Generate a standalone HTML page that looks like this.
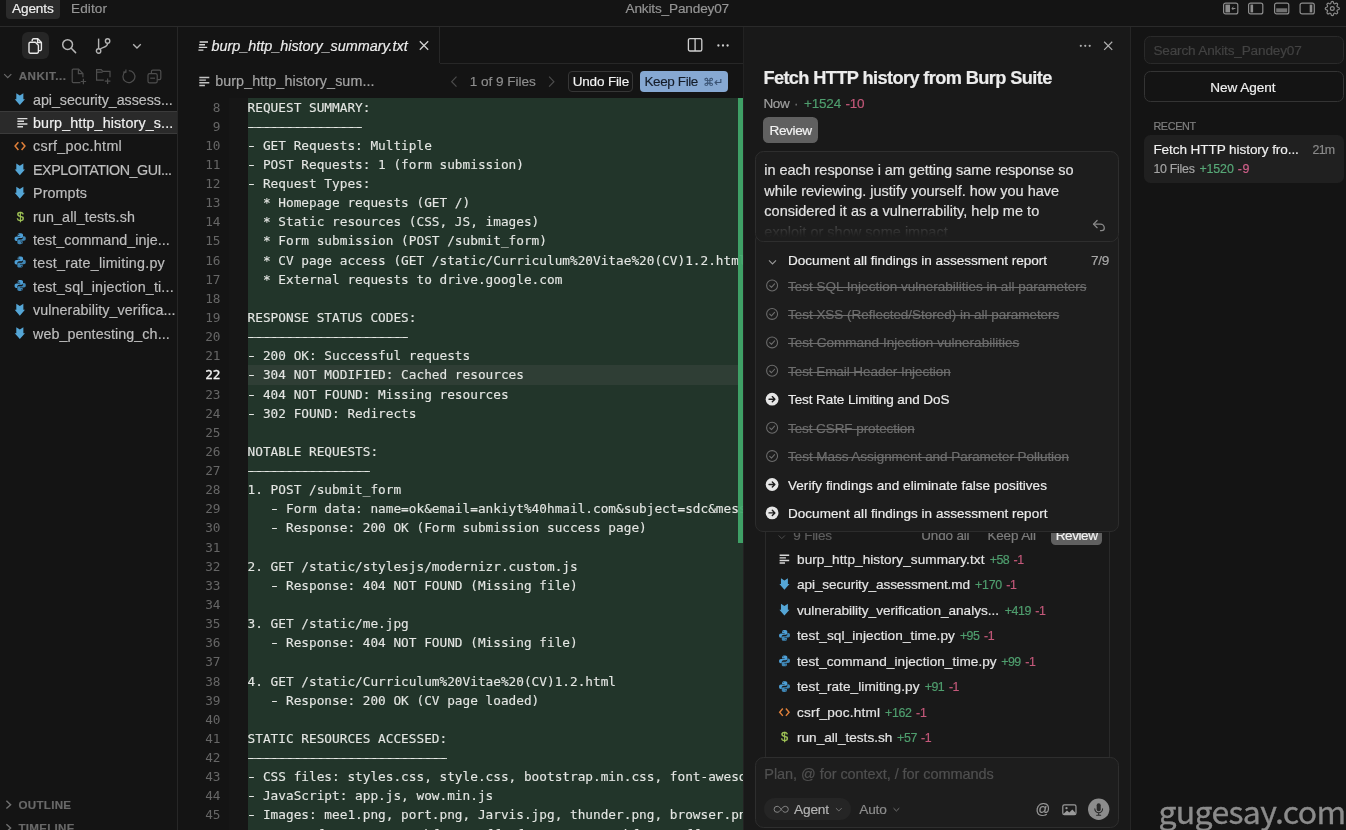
<!DOCTYPE html>
<html lang="en">
<head>
<meta charset="utf-8">
<title>burp_http_history_summary.txt - Ankits_Pandey07</title>
<style>
*{box-sizing:border-box;margin:0;padding:0}
html,body{width:1346px;height:830px;overflow:hidden;background:#141414}
body{position:relative;font-family:"Liberation Sans",sans-serif;color:#d6d6d6;font-size:14px;will-change:transform}
.abs{position:absolute}
.t{position:absolute;white-space:pre;line-height:1;-webkit-text-stroke:0.18px}
svg{position:absolute;overflow:visible}
.ln{position:absolute;left:178px;width:42.5px;text-align:right;font-family:"DejaVu Sans Mono","Liberation Mono",monospace;font-size:12.76px;color:#666666;line-height:19.135px;height:19.135px;white-space:pre}
.cl{position:absolute;left:247.6px;width:496px;overflow:hidden;font-family:"DejaVu Sans Mono","Liberation Mono",monospace;font-size:12.76px;color:#e4e6e3;-webkit-text-stroke:0.12px;line-height:19.135px;height:19.135px;white-space:pre}
</style>
</head>
<body>
<!-- top bar -->
<div class="abs" style="left:0px;top:26px;width:1346px;height:1px;background:#2a2a2a"></div>
<div class="abs" style="left:6px;top:-3px;width:54px;height:21.5px;border-radius:4px;background:#2b2b2b"></div>
<span class="t" style="left:12.0px;top:2.0px;font-size:13.6px;color:#eeeeee;letter-spacing:-0.121px;-webkit-text-stroke:0.2px #eee;">Agents</span>
<span class="t" style="left:71.0px;top:2.0px;font-size:13.6px;color:#959595;letter-spacing:0.081px;">Editor</span>
<span class="t" style="left:625.5px;top:2.0px;font-size:13.6px;color:#959595;letter-spacing:-0.154px;">Ankits_Pandey07</span>
<svg style="left:1223px;top:2px" width="15.4" height="12" viewBox="0 0 15.4 12" fill="none" stroke="#8c8c8c" stroke-width="1.2"><g transform="translate(0.000 0.500)"><rect x="0.6" y="0.6" width="14.2" height="10.8" rx="2"/><rect x="2.4" y="2.1" width="4.6" height="7.8" fill="#8c8c8c" stroke="none"/><path d="M12.4 6H9M10.4 4.5L8.9 6l1.5 1.5" stroke-width="1"/></g></svg>
<svg style="left:1248px;top:2px" width="15.4" height="12" viewBox="0 0 15.4 12" fill="none" stroke="#8c8c8c" stroke-width="1.2"><g transform="translate(0.000 0.500)"><rect x="0.6" y="0.6" width="14.2" height="10.8" rx="2"/><rect x="2.5" y="2.1" width="2.6" height="7.8" fill="#8c8c8c" stroke="none"/></g></svg>
<svg style="left:1274px;top:2px" width="15.4" height="12" viewBox="0 0 15.4 12" fill="none" stroke="#8c8c8c" stroke-width="1.2"><g transform="translate(0.000 0.500)"><rect x="0.6" y="0.6" width="14.2" height="10.8" rx="2"/><rect x="2.2" y="5.8" width="11" height="4" fill="#707070" stroke="none"/></g></svg>
<svg style="left:1299px;top:2px" width="15.4" height="12" viewBox="0 0 15.4 12" fill="none" stroke="#8c8c8c" stroke-width="1.2"><g transform="translate(0.500 0.500)"><rect x="0.6" y="0.6" width="14.2" height="10.8" rx="2"/><rect x="10.2" y="2.1" width="2.6" height="7.8" fill="#8c8c8c" stroke="none"/></g></svg>
<svg style="left:1324px;top:0px" width="15.4" height="15.4" viewBox="0 0 24 24" fill="none" stroke="#8c8c8c" stroke-width="1.8" stroke-linejoin="round"><g transform="translate(0.935 1.247)"><circle cx="12" cy="12" r="3"/><path d="M19.4 15a1.65 1.65 0 0 0 .33 1.82l.06.06a2 2 0 1 1-2.83 2.83l-.06-.06a1.65 1.65 0 0 0-1.82-.33 1.65 1.65 0 0 0-1 1.51V21a2 2 0 0 1-4 0v-.09A1.65 1.65 0 0 0 9 19.4a1.65 1.65 0 0 0-1.82.33l-.06.06a2 2 0 1 1-2.83-2.83l.06-.06a1.65 1.65 0 0 0 .33-1.82 1.65 1.65 0 0 0-1.51-1H3a2 2 0 0 1 0-4h.09A1.65 1.65 0 0 0 4.6 9a1.65 1.65 0 0 0-.33-1.82l-.06-.06a2 2 0 1 1 2.83-2.83l.06.06a1.65 1.65 0 0 0 1.82.33H9a1.65 1.65 0 0 0 1-1.51V3a2 2 0 0 1 4 0v.09a1.65 1.65 0 0 0 1 1.51 1.65 1.65 0 0 0 1.82-.33l.06-.06a2 2 0 1 1 2.83 2.83l-.06.06a1.65 1.65 0 0 0-.33 1.82V9a1.65 1.65 0 0 0 1.51 1H21a2 2 0 0 1 0 4h-.09a1.65 1.65 0 0 0-1.51 1z"/></g></svg>
<!-- sidebar -->
<div class="abs" style="left:177px;top:27px;width:1px;height:803px;background:#272727"></div>
<div class="abs" style="left:22px;top:32px;width:27px;height:27px;border-radius:6px;background:#262626"></div>
<svg style="left:28px;top:38px" width="15" height="16" viewBox="0 0 15 16" fill="none" stroke="#e8e8e8" stroke-width="1.4" stroke-linejoin="round"><path d="M4.2 3.2V2.2a1.4 1.4 0 0 1 1.4-1.4h4.2l3.6 3.6v6.8a1.4 1.4 0 0 1-1.4 1.4h-1.2"/><path d="M9.6 0.9v3.6h3.7"/><path d="M2.4 4.2h5l3 3v6.6a1.4 1.4 0 0 1-1.4 1.4H2.4A1.4 1.4 0 0 1 1 13.8V5.6a1.4 1.4 0 0 1 1.4-1.4z"/></svg>
<svg style="left:61px;top:38px" width="16" height="16" viewBox="0 0 16 16" fill="none" stroke="#b4b4b4" stroke-width="1.5" stroke-linecap="round"><circle cx="6.6" cy="6.6" r="4.9"/><path d="M10.3 10.3l4.3 4.3"/></svg>
<svg style="left:95px;top:37px" width="16" height="18" viewBox="0 0 16 18" fill="none" stroke="#b4b4b4" stroke-width="1.4"><circle cx="3.6" cy="14" r="2.2"/><circle cx="12.6" cy="4" r="2.2"/><path d="M3.6 1.6v10.2"/><path d="M12.6 6.2c0 4.2-4.6 3.6-7.4 6"/></svg>
<svg style="left:132px;top:43px" width="9" height="5.4" viewBox="0 0 10 6" fill="none" stroke="#b4b4b4" stroke-width="1.5"><g transform="translate(0.556 0.556)"><path d="M0.8 0.8L5 5l4.2-4.2"/></g></svg>
<svg style="left:3px;top:73px" width="8.5" height="5.1" viewBox="0 0 10 6" fill="none" stroke="#696969" stroke-width="1.4"><g transform="translate(0.588 0.588)"><path d="M0.8 0.8L5 5l4.2-4.2"/></g></svg>
<span class="t" style="left:18.7px;top:70.0px;font-size:11.6px;color:#696969;letter-spacing:0.498px;font-weight:bold;">ANKIT...</span>
<svg style="left:71px;top:68px" width="16" height="17" viewBox="0 0 16 17" fill="none" stroke="#4e4e4e" stroke-width="1.2"><path d="M9.4 14.6H2.2a1 1 0 0 1-1-1V2.2a1 1 0 0 1 1-1h5.4l4.3 4.3v3.8"/><path d="M7.4 1.4v4.3h4.3"/><path d="M12.4 10.8v5.4M9.7 13.5h5.4"/></svg>
<svg style="left:95px;top:68px" width="17" height="17" viewBox="0 0 17 17" fill="none" stroke="#4e4e4e" stroke-width="1.2"><path d="M8.8 12.2H1.6V1.6h4.6l1.6 1.7h7.2v6"/><path d="M1.6 4.2h6"/><path d="M12.6 10.4v5.6M9.8 13.2h5.6"/></svg>
<svg style="left:121px;top:69px" width="15" height="15" viewBox="0 0 15 15" fill="none" stroke="#4e4e4e" stroke-width="1.2"><path d="M4.6 2.6A6 6 0 1 0 7.8 1.6"/><path d="M4.9 0.4v2.7H2.2"/></svg>
<svg style="left:147px;top:69px" width="15" height="15" viewBox="0 0 15 15" fill="none" stroke="#4e4e4e" stroke-width="1.2"><rect x="1" y="4.6" width="9.2" height="9.2" rx="1.6"/><path d="M4.4 4.4V2.6a1.4 1.4 0 0 1 1.4-1.4h6.6a1.4 1.4 0 0 1 1.4 1.4v6.6a1.4 1.4 0 0 1-1.4 1.4h-2"/><path d="M3.2 9.2h4.8"/></svg>
<svg style="left:14px;top:92px" width="10.48" height="12.42" viewBox="0 0 10.8 12.8" ><g transform="translate(0.618 0.927)"><path d="M1.75 0.3 L5.4 2.7 L9.05 0.3 L9.05 6.5 L10.7 6.5 L5.4 12.6 L0.1 6.5 L1.75 6.5 Z" fill="#55a6d6"/></g></svg>
<span class="t" style="left:33.0px;top:93.0px;font-size:14.3px;color:#bebebe;letter-spacing:-0.043px;">api_security_assess...</span>
<div class="abs" style="left:0px;top:110.8px;width:177px;height:23.599999999999998px;background:#2a2a2a;border-top:1px solid #3b3b3b;border-bottom:1px solid #3b3b3b"></div>
<svg style="left:17px;top:117px" width="10" height="10" viewBox="0 0 10 10" fill="none" stroke="#dcdcdc" stroke-width="1.45"><g transform="translate(0.400 0.600)"><path d="M0 1H10M0 3.7H6.6M0 6.4H10M0 9.1H5.6"/></g></svg>
<span class="t" style="left:33.0px;top:116.0px;font-size:14.3px;color:#f0f0f0;letter-spacing:0.132px;">burp_http_history_s...</span>
<svg style="left:14px;top:141px" width="12" height="9" viewBox="0 0 12 9" fill="none" stroke="#e0803a" stroke-width="1.5"><g transform="translate(0.000 0.600)"><path d="M4.4 0.7L1.1 4.5l3.3 3.8M7.6 0.7l3.3 3.8-3.3 3.8"/></g></svg>
<span class="t" style="left:33.0px;top:139.0px;font-size:14.3px;color:#bebebe;letter-spacing:0.314px;">csrf_poc.html</span>
<svg style="left:14px;top:163px" width="10.48" height="12.42" viewBox="0 0 10.8 12.8" ><g transform="translate(0.618 0.103)"><path d="M1.75 0.3 L5.4 2.7 L9.05 0.3 L9.05 6.5 L10.7 6.5 L5.4 12.6 L0.1 6.5 L1.75 6.5 Z" fill="#55a6d6"/></g></svg>
<span class="t" style="left:33.0px;top:163.0px;font-size:14.3px;color:#bebebe;letter-spacing:-0.454px;">EXPLOITATION_GUI...</span>
<svg style="left:14px;top:186px" width="10.48" height="12.42" viewBox="0 0 10.8 12.8" ><g transform="translate(0.618 0.515)"><path d="M1.75 0.3 L5.4 2.7 L9.05 0.3 L9.05 6.5 L10.7 6.5 L5.4 12.6 L0.1 6.5 L1.75 6.5 Z" fill="#55a6d6"/></g></svg>
<span class="t" style="left:33.0px;top:186.0px;font-size:14.3px;color:#bebebe;letter-spacing:0.109px;">Prompts</span>
<span class="t" style="left:16.7px;top:210.0px;font-size:13px;color:#a3c858;-webkit-text-stroke:0.3px #a3c858;">$</span>
<span class="t" style="left:33.0px;top:210.0px;font-size:14.3px;color:#bebebe;letter-spacing:0.116px;">run_all_tests.sh</span>
<svg style="left:14px;top:232px" width="11.76" height="11.76" viewBox="0 0 14 14" ><g transform="translate(0.357 0.952)"><path d="M6.9 0.4c-2 0-2.9 0.8-2.9 2v1.5h3.1v0.6H2.6C1.2 4.5 0.3 5.5 0.3 7.2c0 1.7 0.8 2.7 2.1 2.7h1.2V8.3c0-1.2 1-2.2 2.3-2.2h2.7c1 0 1.8-0.8 1.8-1.8V2.4c0-1.1-1-2-2.3-2H6.9zM5.3 1.4a0.6 0.6 0 1 1 0 1.2 0.6 0.6 0 0 1 0-1.2z" fill="#4d9fd6"/><path d="M7.1 13.6c2 0 2.9-0.8 2.9-2v-1.5H6.9V9.5h4.5c1.4 0 2.3-1 2.3-2.7 0-1.7-0.8-2.7-2.1-2.7h-1.2v1.6c0 1.2-1 2.2-2.3 2.2H5.4c-1 0-1.8 0.8-1.8 1.8v1.9c0 1.1 1 2 2.3 2h1.2zM8.7 12.6a0.6 0.6 0 1 1 0-1.2 0.6 0.6 0 0 1 0 1.2z" fill="#3f86b5"/></g></svg>
<span class="t" style="left:33.0px;top:233.0px;font-size:14.3px;color:#bebebe;letter-spacing:0.045px;">test_command_inje...</span>
<svg style="left:14px;top:256px" width="11.76" height="11.76" viewBox="0 0 14 14" ><g transform="translate(0.357 0.238)"><path d="M6.9 0.4c-2 0-2.9 0.8-2.9 2v1.5h3.1v0.6H2.6C1.2 4.5 0.3 5.5 0.3 7.2c0 1.7 0.8 2.7 2.1 2.7h1.2V8.3c0-1.2 1-2.2 2.3-2.2h2.7c1 0 1.8-0.8 1.8-1.8V2.4c0-1.1-1-2-2.3-2H6.9zM5.3 1.4a0.6 0.6 0 1 1 0 1.2 0.6 0.6 0 0 1 0-1.2z" fill="#4d9fd6"/><path d="M7.1 13.6c2 0 2.9-0.8 2.9-2v-1.5H6.9V9.5h4.5c1.4 0 2.3-1 2.3-2.7 0-1.7-0.8-2.7-2.1-2.7h-1.2v1.6c0 1.2-1 2.2-2.3 2.2H5.4c-1 0-1.8 0.8-1.8 1.8v1.9c0 1.1 1 2 2.3 2h1.2zM8.7 12.6a0.6 0.6 0 1 1 0-1.2 0.6 0.6 0 0 1 0 1.2z" fill="#3f86b5"/></g></svg>
<span class="t" style="left:33.0px;top:256.0px;font-size:14.3px;color:#bebebe;letter-spacing:0.231px;">test_rate_limiting.py</span>
<svg style="left:14px;top:279px" width="11.76" height="11.76" viewBox="0 0 14 14" ><g transform="translate(0.357 0.714)"><path d="M6.9 0.4c-2 0-2.9 0.8-2.9 2v1.5h3.1v0.6H2.6C1.2 4.5 0.3 5.5 0.3 7.2c0 1.7 0.8 2.7 2.1 2.7h1.2V8.3c0-1.2 1-2.2 2.3-2.2h2.7c1 0 1.8-0.8 1.8-1.8V2.4c0-1.1-1-2-2.3-2H6.9zM5.3 1.4a0.6 0.6 0 1 1 0 1.2 0.6 0.6 0 0 1 0-1.2z" fill="#4d9fd6"/><path d="M7.1 13.6c2 0 2.9-0.8 2.9-2v-1.5H6.9V9.5h4.5c1.4 0 2.3-1 2.3-2.7 0-1.7-0.8-2.7-2.1-2.7h-1.2v1.6c0 1.2-1 2.2-2.3 2.2H5.4c-1 0-1.8 0.8-1.8 1.8v1.9c0 1.1 1 2 2.3 2h1.2zM8.7 12.6a0.6 0.6 0 1 1 0-1.2 0.6 0.6 0 0 1 0 1.2z" fill="#3f86b5"/></g></svg>
<span class="t" style="left:33.0px;top:280.0px;font-size:14.3px;color:#bebebe;letter-spacing:0.171px;">test_sql_injection_ti...</span>
<svg style="left:14px;top:303px" width="10.48" height="12.42" viewBox="0 0 10.8 12.8" ><g transform="translate(0.618 0.515)"><path d="M1.75 0.3 L5.4 2.7 L9.05 0.3 L9.05 6.5 L10.7 6.5 L5.4 12.6 L0.1 6.5 L1.75 6.5 Z" fill="#55a6d6"/></g></svg>
<span class="t" style="left:33.0px;top:303.0px;font-size:14.3px;color:#bebebe;letter-spacing:0.078px;">vulnerability_verifica...</span>
<svg style="left:14px;top:326px" width="10.48" height="12.42" viewBox="0 0 10.8 12.8" ><g transform="translate(0.618 0.927)"><path d="M1.75 0.3 L5.4 2.7 L9.05 0.3 L9.05 6.5 L10.7 6.5 L5.4 12.6 L0.1 6.5 L1.75 6.5 Z" fill="#55a6d6"/></g></svg>
<span class="t" style="left:33.0px;top:327.0px;font-size:14.3px;color:#bebebe;letter-spacing:0.084px;">web_pentesting_ch...</span>
<svg style="left:5px;top:800px" width="6" height="9" viewBox="0 0 6 9" fill="none" stroke="#707070" stroke-width="1.4"><g transform="translate(0.600 0.200)"><path d="M0.8 0.6l4.2 3.9-4.2 3.9"/></g></svg>
<span class="t" style="left:18.5px;top:799.0px;font-size:11.6px;color:#696969;letter-spacing:0.273px;font-weight:bold;">OUTLINE</span>
<svg style="left:5px;top:823px" width="6" height="9" viewBox="0 0 6 9" fill="none" stroke="#707070" stroke-width="1.4"><g transform="translate(0.600 0.600)"><path d="M0.8 0.6l4.2 3.9-4.2 3.9"/></g></svg>
<span class="t" style="left:18.5px;top:822.0px;font-size:11.6px;color:#696969;letter-spacing:0.261px;font-weight:bold;">TIMELINE</span>
<!-- editor -->
<div class="abs" style="left:439px;top:27px;width:1px;height:36px;background:#272727"></div>
<div class="abs" style="left:440px;top:63px;width:304px;height:1px;background:#272727"></div>
<svg style="left:198px;top:41px" width="10" height="10" viewBox="0 0 10 10" fill="none" stroke="#d8d8d8" stroke-width="1.4"><path d="M1.6 1H10M1.2 3.7H7M0.8 6.4H9.2M0.4 9.1H5.4"/></svg>
<span class="t" style="left:211.5px;top:39.0px;font-size:14.4px;color:#ececec;letter-spacing:-0.007px;font-style:italic;">burp_http_history_summary.txt</span>
<svg style="left:419px;top:40px" width="10" height="10" viewBox="0 0 10 10" fill="none" stroke="#d0d0d0" stroke-width="1.3"><g transform="translate(0.000 0.500)"><path d="M0.8 0.8l8.4 8.4M9.2 0.8L0.8 9.2"/></g></svg>
<svg style="left:687px;top:37px" width="15" height="14" viewBox="0 0 15 14" fill="none" stroke="#d0d0d0" stroke-width="1.3"><g transform="translate(0.600 0.800)"><rect x="0.8" y="0.8" width="13.4" height="12.4" rx="1.6"/><path d="M7.5 0.8v12.4"/></g></svg>
<svg style="left:717px;top:44px" width="12" height="3" viewBox="0 0 12 3" fill="#d0d0d0"><circle cx="1.4" cy="1.5" r="1.15"/><circle cx="6" cy="1.5" r="1.15"/><circle cx="10.6" cy="1.5" r="1.15"/></svg>
<svg style="left:199px;top:76px" width="10" height="10" viewBox="0 0 10 10" fill="none" stroke="#c4c4c4" stroke-width="1.45"><g transform="translate(0.300 0.400)"><path d="M0 1H10M0 3.7H6.6M0 6.4H10M0 9.1H5.6"/></g></svg>
<span class="t" style="left:215.2px;top:74.0px;font-size:14.3px;color:#a4a4a4;letter-spacing:0.085px;">burp_http_history_sum...</span>
<svg style="left:450px;top:76px" width="6.4" height="11.3" viewBox="0 0 6.4 11.3" fill="none" stroke="#4c4c4c" stroke-width="1.2"><g transform="translate(0.700 0.000)"><path d="M5.8 0.6L1 5.65l4.8 5.05"/></g></svg>
<span class="t" style="left:469.7px;top:75.0px;font-size:13.6px;color:#8e8e8e;letter-spacing:-0.033px;">1 of 9 Files</span>
<svg style="left:548px;top:76px" width="6.4" height="11.3" viewBox="0 0 6.4 11.3" fill="none" stroke="#4c4c4c" stroke-width="1.2"><g transform="translate(0.500 0.000)"><path d="M0.6 0.6l4.8 5.05-4.8 5.05"/></g></svg>
<div class="abs" style="left:568.4px;top:71.3px;width:64.4px;height:20.6px;border:1px solid #363636;border-radius:4px;background:#151515"></div>
<span class="t" style="left:572.7px;top:75.0px;font-size:13.5px;color:#f4f4f4;letter-spacing:-0.165px;-webkit-text-stroke:0.15px #f4f4f4;">Undo File</span>
<div class="abs" style="left:639.7px;top:71.3px;width:88.4px;height:20.6px;border-radius:4px;background:#86a8d2"></div>
<span class="t" style="left:644.5px;top:75.0px;font-size:13.5px;color:#141c28;letter-spacing:-0.394px;-webkit-text-stroke:0.12px #141c28;">Keep File</span>
<span class="t" style="left:703.2px;top:76.6px;font-size:11px;color:#3a5272;font-family:'DejaVu Sans',sans-serif;letter-spacing:0.091px;">⌘↵</span>
<div class="abs" style="left:229px;top:97.5px;width:18.6px;height:733px;background:#161616"></div>
<div class="abs" style="left:247.6px;top:97.5px;width:495.6px;height:733px;background:#22352a"></div>
<div class="abs" style="left:247.6px;top:365.39px;width:490.6px;height:19.14px;background:#2f3e35"></div>
<div class="ln" style="top:98px">8</div><div class="cl" style="top:98px">REQUEST SUMMARY:</div>
<div class="ln" style="top:117px">9</div><div class="cl" style="top:117px">---------------</div>
<div class="abs" style="left:248.3px;top:127px;width:114.0px;height:1.2px;background:#e4e6e3;opacity:.85"></div>
<div class="ln" style="top:136px">10</div><div class="cl" style="top:136px">- GET Requests: Multiple</div>
<div class="abs" style="left:248.5px;top:146px;width:5.9px;height:1.2px;background:#e4e6e3;opacity:.9"></div>
<div class="ln" style="top:155px">11</div><div class="cl" style="top:155px">- POST Requests: 1 (form submission)</div>
<div class="abs" style="left:248.5px;top:165px;width:5.9px;height:1.2px;background:#e4e6e3;opacity:.9"></div>
<div class="ln" style="top:174px">12</div><div class="cl" style="top:174px">- Request Types:</div>
<div class="abs" style="left:248.5px;top:184px;width:5.9px;height:1.2px;background:#e4e6e3;opacity:.9"></div>
<div class="ln" style="top:193px">13</div><div class="cl" style="top:193px">  * Homepage requests (GET /)</div>
<div class="ln" style="top:212px">14</div><div class="cl" style="top:212px">  * Static resources (CSS, JS, images)</div>
<div class="ln" style="top:231px">15</div><div class="cl" style="top:231px">  * Form submission (POST /submit_form)</div>
<div class="ln" style="top:251px">16</div><div class="cl" style="top:251px">  * CV page access (GET /static/Curriculum%20Vitae%20(CV)1.2.html)</div>
<div class="ln" style="top:270px">17</div><div class="cl" style="top:270px">  * External requests to drive.google.com</div>
<div class="ln" style="top:289px">18</div><div class="cl" style="top:289px"></div>
<div class="ln" style="top:308px">19</div><div class="cl" style="top:308px">RESPONSE STATUS CODES:</div>
<div class="ln" style="top:327px">20</div><div class="cl" style="top:327px">---------------------</div>
<div class="abs" style="left:248.3px;top:337px;width:160.1px;height:1.2px;background:#e4e6e3;opacity:.85"></div>
<div class="ln" style="top:346px">21</div><div class="cl" style="top:346px">- 200 OK: Successful requests</div>
<div class="abs" style="left:248.5px;top:356px;width:5.9px;height:1.2px;background:#e4e6e3;opacity:.9"></div>
<div class="ln" style="top:365px;color:#f2f2f2;-webkit-text-stroke:0.3px">22</div><div class="cl" style="top:365px">- 304 NOT MODIFIED: Cached resources</div>
<div class="abs" style="left:248.5px;top:375px;width:5.9px;height:1.2px;background:#e4e6e3;opacity:.9"></div>
<div class="ln" style="top:385px">23</div><div class="cl" style="top:385px">- 404 NOT FOUND: Missing resources</div>
<div class="abs" style="left:248.5px;top:395px;width:5.9px;height:1.2px;background:#e4e6e3;opacity:.9"></div>
<div class="ln" style="top:404px">24</div><div class="cl" style="top:404px">- 302 FOUND: Redirects</div>
<div class="abs" style="left:248.5px;top:414px;width:5.9px;height:1.2px;background:#e4e6e3;opacity:.9"></div>
<div class="ln" style="top:423px">25</div><div class="cl" style="top:423px"></div>
<div class="ln" style="top:442px">26</div><div class="cl" style="top:442px">NOTABLE REQUESTS:</div>
<div class="ln" style="top:461px">27</div><div class="cl" style="top:461px">----------------</div>
<div class="abs" style="left:248.3px;top:471px;width:121.7px;height:1.2px;background:#e4e6e3;opacity:.85"></div>
<div class="ln" style="top:480px">28</div><div class="cl" style="top:480px">1. POST /submit_form</div>
<div class="ln" style="top:499px">29</div><div class="cl" style="top:499px">   - Form data: name=ok&amp;email=ankiyt%40hmail.com&amp;subject=sdc&amp;message=sdcsd</div>
<div class="abs" style="left:271.54px;top:509px;width:5.9px;height:1.2px;background:#e4e6e3;opacity:.9"></div>
<div class="ln" style="top:518px">30</div><div class="cl" style="top:518px">   - Response: 200 OK (Form submission success page)</div>
<div class="abs" style="left:271.54px;top:528px;width:5.9px;height:1.2px;background:#e4e6e3;opacity:.9"></div>
<div class="ln" style="top:538px">31</div><div class="cl" style="top:538px"></div>
<div class="ln" style="top:557px">32</div><div class="cl" style="top:557px">2. GET /static/stylesjs/modernizr.custom.js</div>
<div class="ln" style="top:576px">33</div><div class="cl" style="top:576px">   - Response: 404 NOT FOUND (Missing file)</div>
<div class="abs" style="left:271.54px;top:586px;width:5.9px;height:1.2px;background:#e4e6e3;opacity:.9"></div>
<div class="ln" style="top:595px">34</div><div class="cl" style="top:595px"></div>
<div class="ln" style="top:614px">35</div><div class="cl" style="top:614px">3. GET /static/me.jpg</div>
<div class="ln" style="top:633px">36</div><div class="cl" style="top:633px">   - Response: 404 NOT FOUND (Missing file)</div>
<div class="abs" style="left:271.54px;top:643px;width:5.9px;height:1.2px;background:#e4e6e3;opacity:.9"></div>
<div class="ln" style="top:652px">37</div><div class="cl" style="top:652px"></div>
<div class="ln" style="top:672px">38</div><div class="cl" style="top:672px">4. GET /static/Curriculum%20Vitae%20(CV)1.2.html</div>
<div class="ln" style="top:691px">39</div><div class="cl" style="top:691px">   - Response: 200 OK (CV page loaded)</div>
<div class="abs" style="left:271.54px;top:701px;width:5.9px;height:1.2px;background:#e4e6e3;opacity:.9"></div>
<div class="ln" style="top:710px">40</div><div class="cl" style="top:710px"></div>
<div class="ln" style="top:729px">41</div><div class="cl" style="top:729px">STATIC RESOURCES ACCESSED:</div>
<div class="ln" style="top:748px">42</div><div class="cl" style="top:748px">--------------------------</div>
<div class="abs" style="left:248.3px;top:758px;width:198.5px;height:1.2px;background:#e4e6e3;opacity:.85"></div>
<div class="ln" style="top:767px">43</div><div class="cl" style="top:767px">- CSS files: styles.css, style.css, bootstrap.min.css, font-awesome.min.css</div>
<div class="abs" style="left:248.5px;top:777px;width:5.9px;height:1.2px;background:#e4e6e3;opacity:.9"></div>
<div class="ln" style="top:786px">44</div><div class="cl" style="top:786px">- JavaScript: app.js, wow.min.js</div>
<div class="abs" style="left:248.5px;top:796px;width:5.9px;height:1.2px;background:#e4e6e3;opacity:.9"></div>
<div class="ln" style="top:805px">45</div><div class="cl" style="top:805px">- Images: mee1.png, port.png, Jarvis.jpg, thunder.png, browser.png</div>
<div class="abs" style="left:248.5px;top:815px;width:5.9px;height:1.2px;background:#e4e6e3;opacity:.9"></div>
<div class="ln" style="top:825px">46</div><div class="cl" style="top:825px">- Fonts: fontawesome-webfont.woff, fontawesome-webfont.woff2</div>
<div class="abs" style="left:248.5px;top:835px;width:5.9px;height:1.2px;background:#e4e6e3;opacity:.9"></div>
<div class="abs" style="left:738.2px;top:97.5px;width:5px;height:445px;background:#41a76a;opacity:.94"></div>
<!-- chat -->
<div class="abs" style="left:743.2px;top:27px;width:388px;height:803px;background:#191919;border-left:1px solid #222;border-right:1px solid #262626"></div>
<svg style="left:1079px;top:44px" width="11.5" height="3" viewBox="0 0 11.5 3" fill="#b0b0b0"><g transform="translate(0.500 0.300)"><circle cx="1.3" cy="1.5" r="1.1"/><circle cx="5.75" cy="1.5" r="1.1"/><circle cx="10.2" cy="1.5" r="1.1"/></g></svg>
<svg style="left:1103px;top:41px" width="9.2" height="9.2" viewBox="0 0 10 10" fill="none" stroke="#b0b0b0" stroke-width="1.3"><g transform="translate(0.652 0.217)"><path d="M0.6 0.6l8.8 8.8M9.4 0.6L0.6 9.4"/></g></svg>
<span class="t" style="left:763.4px;top:69.0px;font-size:18.2px;color:#ececec;letter-spacing:-0.606px;font-weight:bold;">Fetch HTTP history from Burp Suite</span>
<span class="t" style="left:763.4px;top:97.0px;font-size:13.5px;color:#a0a0a0;letter-spacing:-0.305px;">Now</span>
<span class="t" style="left:794.0px;top:97.0px;font-size:13.5px;color:#707070;">·</span>
<span class="t" style="left:804.0px;top:97.0px;font-size:13.5px;color:#4f9e6e;letter-spacing:-0.184px;">+1524</span>
<span class="t" style="left:845.4px;top:97.0px;font-size:13.5px;color:#c4587a;letter-spacing:-0.205px;">-10</span>
<div class="abs" style="left:763.1px;top:117.4px;width:55.4px;height:25.5px;border-radius:5.5px;background:#606060"></div>
<span class="t" style="left:769.5px;top:124.0px;font-size:13.6px;color:#f2f2f2;letter-spacing:-0.380px;">Review</span>
<div class="abs" style="left:764.5px;top:522px;width:345.5px;height:240px;border:1px solid #2a2a2a;border-radius:6px"></div>
<div class="abs" style="left:755px;top:232px;width:363.7px;height:300px;border:1px solid #2c2c2c;border-radius:8px;background:#1d1d1d"></div>
<div class="abs" style="left:755px;top:151.4px;width:363.7px;height:90.8px;border:1px solid #2e2e2e;border-radius:8.5px;background:#1d1d1d;overflow:hidden"></div>
<span class="t" style="left:764.3px;top:163.0px;font-size:14.5px;color:#e2e2e2;letter-spacing:-0.060px;">in each response i am getting same response so</span>
<span class="t" style="left:764.3px;top:184.0px;font-size:14.5px;color:#e2e2e2;letter-spacing:-0.023px;">while reviewing. justify yourself. how you have</span>
<span class="t" style="left:764.3px;top:204.0px;font-size:14.5px;color:#e2e2e2;letter-spacing:0.027px;">considered it as a vulnerrability, help me to</span>
<span class="t" style="left:764.3px;top:225.0px;font-size:14.5px;color:#5c5c5c;letter-spacing:0.017px;">exploit or show some impact</span>
<div class="abs" style="left:756px;top:222px;width:361.7px;height:19.2px;background:linear-gradient(to bottom,rgba(29,29,29,0) 0%,rgba(29,29,29,.5) 35%,rgba(29,29,29,.92) 70%,rgba(29,29,29,1) 85%);border-radius:0 0 8px 8px"></div>
<svg style="left:1092px;top:219px" width="13" height="12" viewBox="0 0 13 12" fill="none" stroke="#8a8a8a" stroke-width="1.25" stroke-linecap="round" stroke-linejoin="round"><g transform="translate(0.500 0.500)"><path d="M4.6 1L1 4.6l3.6 3.6"/><path d="M1.2 4.6h6.6a4 4 0 0 1 4 4v0a2.6 2.6 0 0 1-2.6 2.6H8"/></g></svg>
<svg style="left:768px;top:259px" width="8.4" height="5.04" viewBox="0 0 10 6" fill="none" stroke="#9a9a9a" stroke-width="1.25"><g transform="translate(0.357 0.952)"><path d="M0.8 0.8L5 5l4.2-4.2"/></g></svg>
<span class="t" style="left:788.0px;top:254.0px;font-size:13.6px;color:#ececec;letter-spacing:-0.020px;">Document all findings in assessment report</span>
<span class="t" style="left:1090.9px;top:254.0px;font-size:13.6px;color:#a8a8a8;letter-spacing:-0.235px;">7/9</span>
<svg style="left:765px;top:279px" width="12.4" height="12.4" viewBox="0 0 12 12" fill="none" stroke="#6c6c6c" stroke-width="1.05" stroke-linecap="round" stroke-linejoin="round"><g transform="translate(0.871 0.290)"><circle cx="6" cy="6" r="5.3"/><path d="M3.7 6.2l1.7 1.7 3-3.4"/></g></svg>
<span class="t" style="left:788.0px;top:280.0px;font-size:13.5px;color:#6e6e6e;letter-spacing:0.007px;text-decoration:line-through;text-decoration-thickness:1.1px;">Test SQL Injection vulnerabilities in all parameters</span>
<svg style="left:765px;top:307px" width="12.4" height="12.4" viewBox="0 0 12 12" fill="none" stroke="#6c6c6c" stroke-width="1.05" stroke-linecap="round" stroke-linejoin="round"><g transform="translate(0.871 0.677)"><circle cx="6" cy="6" r="5.3"/><path d="M3.7 6.2l1.7 1.7 3-3.4"/></g></svg>
<span class="t" style="left:788.0px;top:308.0px;font-size:13.5px;color:#6e6e6e;letter-spacing:-0.024px;text-decoration:line-through;text-decoration-thickness:1.1px;">Test XSS (Reflected/Stored) in all parameters</span>
<svg style="left:765px;top:336px" width="12.4" height="12.4" viewBox="0 0 12 12" fill="none" stroke="#6c6c6c" stroke-width="1.05" stroke-linecap="round" stroke-linejoin="round"><g transform="translate(0.871 0.194)"><circle cx="6" cy="6" r="5.3"/><path d="M3.7 6.2l1.7 1.7 3-3.4"/></g></svg>
<span class="t" style="left:788.0px;top:336.0px;font-size:13.5px;color:#6e6e6e;letter-spacing:0.027px;text-decoration:line-through;text-decoration-thickness:1.1px;">Test Command Injection vulnerabilities</span>
<svg style="left:765px;top:364px" width="12.4" height="12.4" viewBox="0 0 12 12" fill="none" stroke="#6c6c6c" stroke-width="1.05" stroke-linecap="round" stroke-linejoin="round"><g transform="translate(0.871 0.581)"><circle cx="6" cy="6" r="5.3"/><path d="M3.7 6.2l1.7 1.7 3-3.4"/></g></svg>
<span class="t" style="left:788.0px;top:365.0px;font-size:13.5px;color:#6e6e6e;letter-spacing:-0.060px;text-decoration:line-through;text-decoration-thickness:1.1px;">Test Email Header Injection</span>
<svg style="left:765px;top:392px" width="13" height="13" viewBox="0 0 13 13" ><g transform="translate(0.600 0.700)"><circle cx="6.5" cy="6.5" r="6.4" fill="#e6e6e6"/><path d="M3.4 6.5h5.6M6.7 3.9l2.6 2.6-2.6 2.6" fill="none" stroke="#1d1d1d" stroke-width="1.35" stroke-linecap="round" stroke-linejoin="round"/></g></svg>
<span class="t" style="left:788.0px;top:393.0px;font-size:13.5px;color:#ececec;letter-spacing:-0.088px;">Test Rate Limiting and DoS</span>
<svg style="left:765px;top:421px" width="12.4" height="12.4" viewBox="0 0 12 12" fill="none" stroke="#6c6c6c" stroke-width="1.05" stroke-linecap="round" stroke-linejoin="round"><g transform="translate(0.871 0.484)"><circle cx="6" cy="6" r="5.3"/><path d="M3.7 6.2l1.7 1.7 3-3.4"/></g></svg>
<span class="t" style="left:788.0px;top:422.0px;font-size:13.5px;color:#6e6e6e;letter-spacing:-0.080px;text-decoration:line-through;text-decoration-thickness:1.1px;">Test CSRF protection</span>
<svg style="left:765px;top:449px" width="12.4" height="12.4" viewBox="0 0 12 12" fill="none" stroke="#6c6c6c" stroke-width="1.05" stroke-linecap="round" stroke-linejoin="round"><g transform="translate(0.871 0.871)"><circle cx="6" cy="6" r="5.3"/><path d="M3.7 6.2l1.7 1.7 3-3.4"/></g></svg>
<span class="t" style="left:788.0px;top:450.0px;font-size:13.5px;color:#6e6e6e;letter-spacing:-0.043px;text-decoration:line-through;text-decoration-thickness:1.1px;">Test Mass Assignment and Parameter Pollution</span>
<svg style="left:765px;top:478px" width="13" height="13" viewBox="0 0 13 13" ><g transform="translate(0.600 0.000)"><circle cx="6.5" cy="6.5" r="6.4" fill="#e6e6e6"/><path d="M3.4 6.5h5.6M6.7 3.9l2.6 2.6-2.6 2.6" fill="none" stroke="#1d1d1d" stroke-width="1.35" stroke-linecap="round" stroke-linejoin="round"/></g></svg>
<span class="t" style="left:788.0px;top:479.0px;font-size:13.5px;color:#ececec;letter-spacing:0.052px;">Verify findings and eliminate false positives</span>
<svg style="left:765px;top:506px" width="13" height="13" viewBox="0 0 13 13" ><g transform="translate(0.600 0.400)"><circle cx="6.5" cy="6.5" r="6.4" fill="#e6e6e6"/><path d="M3.4 6.5h5.6M6.7 3.9l2.6 2.6-2.6 2.6" fill="none" stroke="#1d1d1d" stroke-width="1.35" stroke-linecap="round" stroke-linejoin="round"/></g></svg>
<span class="t" style="left:788.0px;top:507.0px;font-size:13.5px;color:#ececec;letter-spacing:0.033px;">Document all findings in assessment report</span>
<div class="abs" style="left:756px;top:532.6px;width:362px;height:20px;overflow:hidden">
<svg style="left:22px;top:1px" width="7.4" height="4.44" viewBox="0 0 10 6" fill="none" stroke="#5a5a5a" stroke-width="1.1"><g transform="translate(0.135 1.216)"><path d="M0.8 0.8L5 5l4.2-4.2"/></g></svg>
<span class="t" style="left:37.3px;top:-4.0px;font-size:13.5px;color:#5e5e5e;letter-spacing:-0.181px;">9 Files</span>
<span class="t" style="left:165.3px;top:-4.0px;font-size:13.5px;color:#7c7c7c;letter-spacing:-0.179px;">Undo all</span>
<span class="t" style="left:231.4px;top:-4.0px;font-size:13.5px;color:#7c7c7c;letter-spacing:-0.143px;">Keep All</span>
<div class="abs" style="left:295.20000000000005px;top:-8.600000000000023px;width:51px;height:20.6px;border-radius:4.5px;background:#606060"></div>
<span class="t" style="left:299.8px;top:-4.0px;font-size:13.5px;color:#f2f2f2;letter-spacing:-0.428px;">Review</span>
</div>
<svg style="left:779px;top:554px" width="9.6" height="9.6" viewBox="0 0 10 10" fill="none" stroke="#d8d8d8" stroke-width="1.45"><g transform="translate(0.625 0.312)"><path d="M0 1H10M0 3.7H6.6M0 6.4H10M0 9.1H5.6"/></g></svg>
<span class="t" style="left:797.0px;top:553.0px;font-size:13.6px;color:#e4e4e4;letter-spacing:0.065px;">burp_http_history_summary.txt</span>
<span class="t" style="left:989.7px;top:554.0px;font-size:12.4px;color:#4f9e6e;letter-spacing:-0.544px;">+58</span>
<span class="t" style="left:1013.5px;top:554.0px;font-size:12.4px;color:#c4587a;letter-spacing:-0.266px;">-1</span>
<svg style="left:779px;top:577px" width="10.26" height="12.16" viewBox="0 0 10.8 12.8" ><g transform="translate(0.316 0.947)"><path d="M1.75 0.3 L5.4 2.7 L9.05 0.3 L9.05 6.5 L10.7 6.5 L5.4 12.6 L0.1 6.5 L1.75 6.5 Z" fill="#55a6d6"/></g></svg>
<span class="t" style="left:797.0px;top:578.0px;font-size:13.6px;color:#e4e4e4;letter-spacing:-0.088px;">api_security_assessment.md</span>
<span class="t" style="left:975.0px;top:579.0px;font-size:12.4px;color:#4f9e6e;letter-spacing:-0.230px;">+170</span>
<span class="t" style="left:1006.2px;top:579.0px;font-size:12.4px;color:#c4587a;letter-spacing:-0.416px;">-1</span>
<svg style="left:779px;top:603px" width="10.26" height="12.16" viewBox="0 0 10.8 12.8" ><g transform="translate(0.316 0.526)"><path d="M1.75 0.3 L5.4 2.7 L9.05 0.3 L9.05 6.5 L10.7 6.5 L5.4 12.6 L0.1 6.5 L1.75 6.5 Z" fill="#55a6d6"/></g></svg>
<span class="t" style="left:797.0px;top:604.0px;font-size:13.6px;color:#e4e4e4;letter-spacing:-0.014px;">vulnerability_verification_analys...</span>
<span class="t" style="left:1004.8px;top:605.0px;font-size:12.4px;color:#4f9e6e;letter-spacing:-0.455px;">+419</span>
<span class="t" style="left:1035.2px;top:605.0px;font-size:12.4px;color:#c4587a;letter-spacing:-0.416px;">-1</span>
<svg style="left:778px;top:629px" width="11.48" height="11.48" viewBox="0 0 14 14" ><g transform="translate(0.976 0.854)"><path d="M6.9 0.4c-2 0-2.9 0.8-2.9 2v1.5h3.1v0.6H2.6C1.2 4.5 0.3 5.5 0.3 7.2c0 1.7 0.8 2.7 2.1 2.7h1.2V8.3c0-1.2 1-2.2 2.3-2.2h2.7c1 0 1.8-0.8 1.8-1.8V2.4c0-1.1-1-2-2.3-2H6.9zM5.3 1.4a0.6 0.6 0 1 1 0 1.2 0.6 0.6 0 0 1 0-1.2z" fill="#4d9fd6"/><path d="M7.1 13.6c2 0 2.9-0.8 2.9-2v-1.5H6.9V9.5h4.5c1.4 0 2.3-1 2.3-2.7 0-1.7-0.8-2.7-2.1-2.7h-1.2v1.6c0 1.2-1 2.2-2.3 2.2H5.4c-1 0-1.8 0.8-1.8 1.8v1.9c0 1.1 1 2 2.3 2h1.2zM8.7 12.6a0.6 0.6 0 1 1 0-1.2 0.6 0.6 0 0 1 0 1.2z" fill="#3f86b5"/></g></svg>
<span class="t" style="left:797.0px;top:629.0px;font-size:13.6px;color:#e4e4e4;letter-spacing:0.090px;">test_sql_injection_time.py</span>
<span class="t" style="left:959.9px;top:630.0px;font-size:12.4px;color:#4f9e6e;letter-spacing:-0.544px;">+95</span>
<span class="t" style="left:983.9px;top:630.0px;font-size:12.4px;color:#c4587a;letter-spacing:-0.316px;">-1</span>
<svg style="left:778px;top:655px" width="11.48" height="11.48" viewBox="0 0 14 14" ><g transform="translate(0.976 0.244)"><path d="M6.9 0.4c-2 0-2.9 0.8-2.9 2v1.5h3.1v0.6H2.6C1.2 4.5 0.3 5.5 0.3 7.2c0 1.7 0.8 2.7 2.1 2.7h1.2V8.3c0-1.2 1-2.2 2.3-2.2h2.7c1 0 1.8-0.8 1.8-1.8V2.4c0-1.1-1-2-2.3-2H6.9zM5.3 1.4a0.6 0.6 0 1 1 0 1.2 0.6 0.6 0 0 1 0-1.2z" fill="#4d9fd6"/><path d="M7.1 13.6c2 0 2.9-0.8 2.9-2v-1.5H6.9V9.5h4.5c1.4 0 2.3-1 2.3-2.7 0-1.7-0.8-2.7-2.1-2.7h-1.2v1.6c0 1.2-1 2.2-2.3 2.2H5.4c-1 0-1.8 0.8-1.8 1.8v1.9c0 1.1 1 2 2.3 2h1.2zM8.7 12.6a0.6 0.6 0 1 1 0-1.2 0.6 0.6 0 0 1 0 1.2z" fill="#3f86b5"/></g></svg>
<span class="t" style="left:797.0px;top:655.0px;font-size:13.6px;color:#e4e4e4;letter-spacing:0.058px;">test_command_injection_time.py</span>
<span class="t" style="left:1001.3px;top:656.0px;font-size:12.4px;color:#4f9e6e;letter-spacing:-0.544px;">+99</span>
<span class="t" style="left:1025.2px;top:656.0px;font-size:12.4px;color:#c4587a;letter-spacing:-0.316px;">-1</span>
<svg style="left:778px;top:680px" width="11.48" height="11.48" viewBox="0 0 14 14" ><g transform="translate(0.976 0.976)"><path d="M6.9 0.4c-2 0-2.9 0.8-2.9 2v1.5h3.1v0.6H2.6C1.2 4.5 0.3 5.5 0.3 7.2c0 1.7 0.8 2.7 2.1 2.7h1.2V8.3c0-1.2 1-2.2 2.3-2.2h2.7c1 0 1.8-0.8 1.8-1.8V2.4c0-1.1-1-2-2.3-2H6.9zM5.3 1.4a0.6 0.6 0 1 1 0 1.2 0.6 0.6 0 0 1 0-1.2z" fill="#4d9fd6"/><path d="M7.1 13.6c2 0 2.9-0.8 2.9-2v-1.5H6.9V9.5h4.5c1.4 0 2.3-1 2.3-2.7 0-1.7-0.8-2.7-2.1-2.7h-1.2v1.6c0 1.2-1 2.2-2.3 2.2H5.4c-1 0-1.8 0.8-1.8 1.8v1.9c0 1.1 1 2 2.3 2h1.2zM8.7 12.6a0.6 0.6 0 1 1 0-1.2 0.6 0.6 0 0 1 0 1.2z" fill="#3f86b5"/></g></svg>
<span class="t" style="left:797.0px;top:680.0px;font-size:13.6px;color:#e4e4e4;letter-spacing:0.081px;">test_rate_limiting.py</span>
<span class="t" style="left:924.8px;top:681.0px;font-size:12.4px;color:#4f9e6e;letter-spacing:-0.610px;">+91</span>
<span class="t" style="left:948.9px;top:681.0px;font-size:12.4px;color:#c4587a;letter-spacing:-0.466px;">-1</span>
<svg style="left:778px;top:707px" width="11.52" height="8.64" viewBox="0 0 12 9" fill="none" stroke="#e0803a" stroke-width="1.5"><g transform="translate(0.625 0.937)"><path d="M4.4 0.7L1.1 4.5l3.3 3.8M7.6 0.7l3.3 3.8-3.3 3.8"/></g></svg>
<span class="t" style="left:797.0px;top:706.0px;font-size:13.6px;color:#e4e4e4;letter-spacing:0.181px;">csrf_poc.html</span>
<span class="t" style="left:885.1px;top:707.0px;font-size:12.4px;color:#4f9e6e;letter-spacing:-0.380px;">+162</span>
<span class="t" style="left:916.1px;top:707.0px;font-size:12.4px;color:#c4587a;letter-spacing:-0.316px;">-1</span>
<span class="t" style="left:780.9px;top:731.0px;font-size:12.8px;color:#a3c858;-webkit-text-stroke:0.3px #a3c858;">$</span>
<span class="t" style="left:797.0px;top:731.0px;font-size:13.6px;color:#e4e4e4;letter-spacing:0.011px;">run_all_tests.sh</span>
<span class="t" style="left:897.0px;top:732.0px;font-size:12.4px;color:#4f9e6e;letter-spacing:-0.344px;">+57</span>
<span class="t" style="left:921.0px;top:732.0px;font-size:12.4px;color:#c4587a;letter-spacing:-0.266px;">-1</span>
<div class="abs" style="left:755px;top:756.7px;width:363.7px;height:71px;border:1px solid #2e2e2e;border-radius:8.5px;background:#1d1d1d"></div>
<span class="t" style="left:764.3px;top:767.0px;font-size:14.5px;color:#505050;letter-spacing:-0.058px;">Plan, @ for context, / for commands</span>
<div class="abs" style="left:763.9px;top:798.2px;width:86.8px;height:22.2px;border-radius:11.1px;background:#252525"></div>
<svg style="left:773px;top:805px" width="15.6" height="7.4" viewBox="0 0 15.6 7.4" fill="none" stroke="#868686" stroke-width="1.0"><g transform="translate(0.400 0.600)"><path d="M7.8 3.7C6.6 2 5.4 0.7 3.7 0.7a3 3 0 0 0 0 6c1.7 0 2.9-1.3 4.1-3zm0 0c1.2 1.700 2.400 3 4.100 3a3 3 0 0 0 0-6c-1.700 0-2.900 1.300-4.100 3z"/></g></svg>
<span class="t" style="left:794.1px;top:803.0px;font-size:13.7px;color:#b4b4b4;letter-spacing:-0.196px;">Agent</span>
<svg style="left:835px;top:807px" width="6.8" height="4.08" viewBox="0 0 10 6" fill="none" stroke="#8a8a8a" stroke-width="1.15"><g transform="translate(0.588 0.882)"><path d="M0.8 0.8L5 5l4.2-4.2"/></g></svg>
<span class="t" style="left:859.3px;top:803.0px;font-size:13.7px;color:#8c8c8c;letter-spacing:-0.218px;">Auto</span>
<svg style="left:893px;top:807px" width="6.8" height="4.08" viewBox="0 0 10 6" fill="none" stroke="#8a8a8a" stroke-width="1.15"><g transform="translate(0.000 0.882)"><path d="M0.8 0.8L5 5l4.2-4.2"/></g></svg>
<span class="t" style="left:1035.6px;top:802.0px;font-size:14.5px;color:#9a9a9a;">@</span>
<svg style="left:1062px;top:804px" width="14.4" height="11" viewBox="0 0 14.4 11" ><g transform="translate(0.200 0.300)"><rect x="0.6" y="0.6" width="13.2" height="9.8" rx="1.6" fill="none" stroke="#9a9a9a" stroke-width="1.2"/><circle cx="4.3" cy="3.9" r="1.15" fill="#9a9a9a"/><path d="M1.2 9.6l3.600-3.300 2.300 2 3-3.200 3.200 3.300v1.400z" fill="#9a9a9a"/></g></svg>
<svg style="left:1088px;top:798px" width="21.4" height="21.4" viewBox="0 0 21.4 21.4" ><g transform="translate(0.000 0.500)"><circle cx="10.7" cy="10.7" r="10.7" fill="#8c8c8c"/><rect x="8.7" y="4.8" width="4" height="8" rx="2" fill="#2a2a2a"/><path d="M6.800 10.300a3.900 3.900 0 0 0 7.800 0M10.700 14.300v2.300M8.700 16.700h4" fill="none" stroke="#2a2a2a" stroke-width="1.1" stroke-linecap="round"/></g></svg>
<!-- right -->
<div class="abs" style="left:1143.5px;top:36px;width:200.4px;height:27.5px;border:1px solid #2a2a2a;border-radius:6.5px;background:#191919"></div>
<span class="t" style="left:1153.4px;top:44.0px;font-size:13.6px;color:#424242;letter-spacing:-0.168px;">Search Ankits_Pandey07</span>
<div class="abs" style="left:1143.5px;top:71.2px;width:200.4px;height:31px;border:1px solid #343434;border-radius:6.5px;background:#141414"></div>
<span class="t" style="left:1210.3px;top:81.0px;font-size:13.6px;color:#f0f0f0;letter-spacing:-0.072px;">New Agent</span>
<span class="t" style="left:1153.4px;top:121.0px;font-size:10.8px;color:#808080;letter-spacing:-0.332px;">RECENT</span>
<div class="abs" style="left:1143.5px;top:134.6px;width:200.4px;height:48.3px;border-radius:6.5px;background:#202020"></div>
<span class="t" style="left:1153.4px;top:143.0px;font-size:13.6px;color:#f0f0f0;letter-spacing:-0.097px;-webkit-text-stroke:0.15px #f0f0f0;">Fetch HTTP history fro...</span>
<span class="t" style="left:1312.5px;top:144.0px;font-size:12.4px;color:#8a8a8a;letter-spacing:-0.736px;">21m</span>
<span class="t" style="left:1153.4px;top:163.0px;font-size:12.4px;color:#a4a4a4;letter-spacing:-0.274px;">10 Files</span>
<span class="t" style="left:1199.4px;top:163.0px;font-size:12.4px;color:#57a877;letter-spacing:-0.103px;">+1520</span>
<span class="t" style="left:1237.8px;top:163.0px;font-size:12.4px;color:#d0608a;letter-spacing:0.484px;">-9</span>
<span class="t" id="wm" style="left:1158.4px;top:793.9px;font-size:32px;color:#8b8b8b;font-family:'Noto Sans CJK SC','Liberation Sans',sans-serif;letter-spacing:-0.662px;-webkit-text-stroke:0.35px #8b8b8b;">gugesay.com</span>
</body>
</html>
